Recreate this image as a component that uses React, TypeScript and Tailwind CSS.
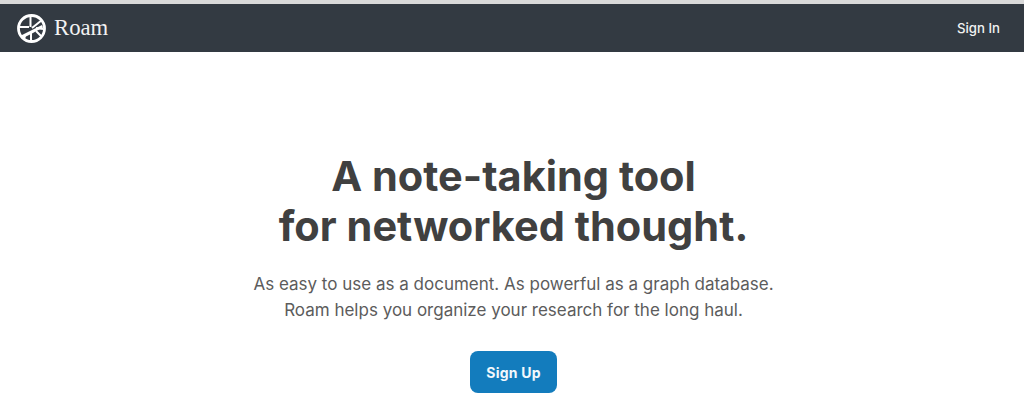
export default function App() {
  return (
    <div className="h-[413px] w-[1024px] overflow-hidden bg-white font-['Inter',sans-serif]">
      <div className="h-[4px] bg-[#d9d9d9]" />
      <header className="flex h-[48px] items-center justify-between bg-[#333a42] pl-[17px] pr-[24px]">
        <div className="flex items-center gap-[8px]">
          <svg width="29" height="29" viewBox="0 0 29 29" fill="none">
            <circle cx="14.5" cy="14.5" r="13" fill="#333a42" stroke="#fff" strokeWidth="2.8" />
            <path d="M13.500 2v11M2 13h10M15 14l10-8M19 14l7 1M14 19v8M8 21l-1 5M19 17l5 5" stroke="#fff" strokeWidth="2" />
            <path d="M3 22l22-11 1 2.500-11 6-9 4.500z" fill="#fff" />
          </svg>
          <span className="font-['Liberation_Serif',serif] text-[22.7px] leading-none text-[#f2f2f2]">Roam</span>
        </div>
        <span className="pt-[1px] text-[13.2px] font-medium text-[#f2f2f2]">Sign In</span>
      </header>
      <main className="flex flex-col items-center pl-[3px] pt-[99px] text-center">
        <h1 className="text-[41.500px] font-bold leading-[50px] text-[#404040]">
          A note-taking tool
          <br />
          for networked thought.
        </h1>
        <p className="mt-[21px] text-[17px] leading-[25.500px] text-[#5c5c5c]">
          As easy to use as a document. As powerful as a graph database.
          <br />
          Roam helps you organize your research for the long haul.
        </p>
        <button className="mt-[28px] h-[42px] w-[87px] rounded-[8px] bg-[#137cbd] text-[14px] font-bold tracking-[0.2px] text-[#f2f8fc]">
          Sign Up
        </button>
      </main>
    </div>
  );
}
